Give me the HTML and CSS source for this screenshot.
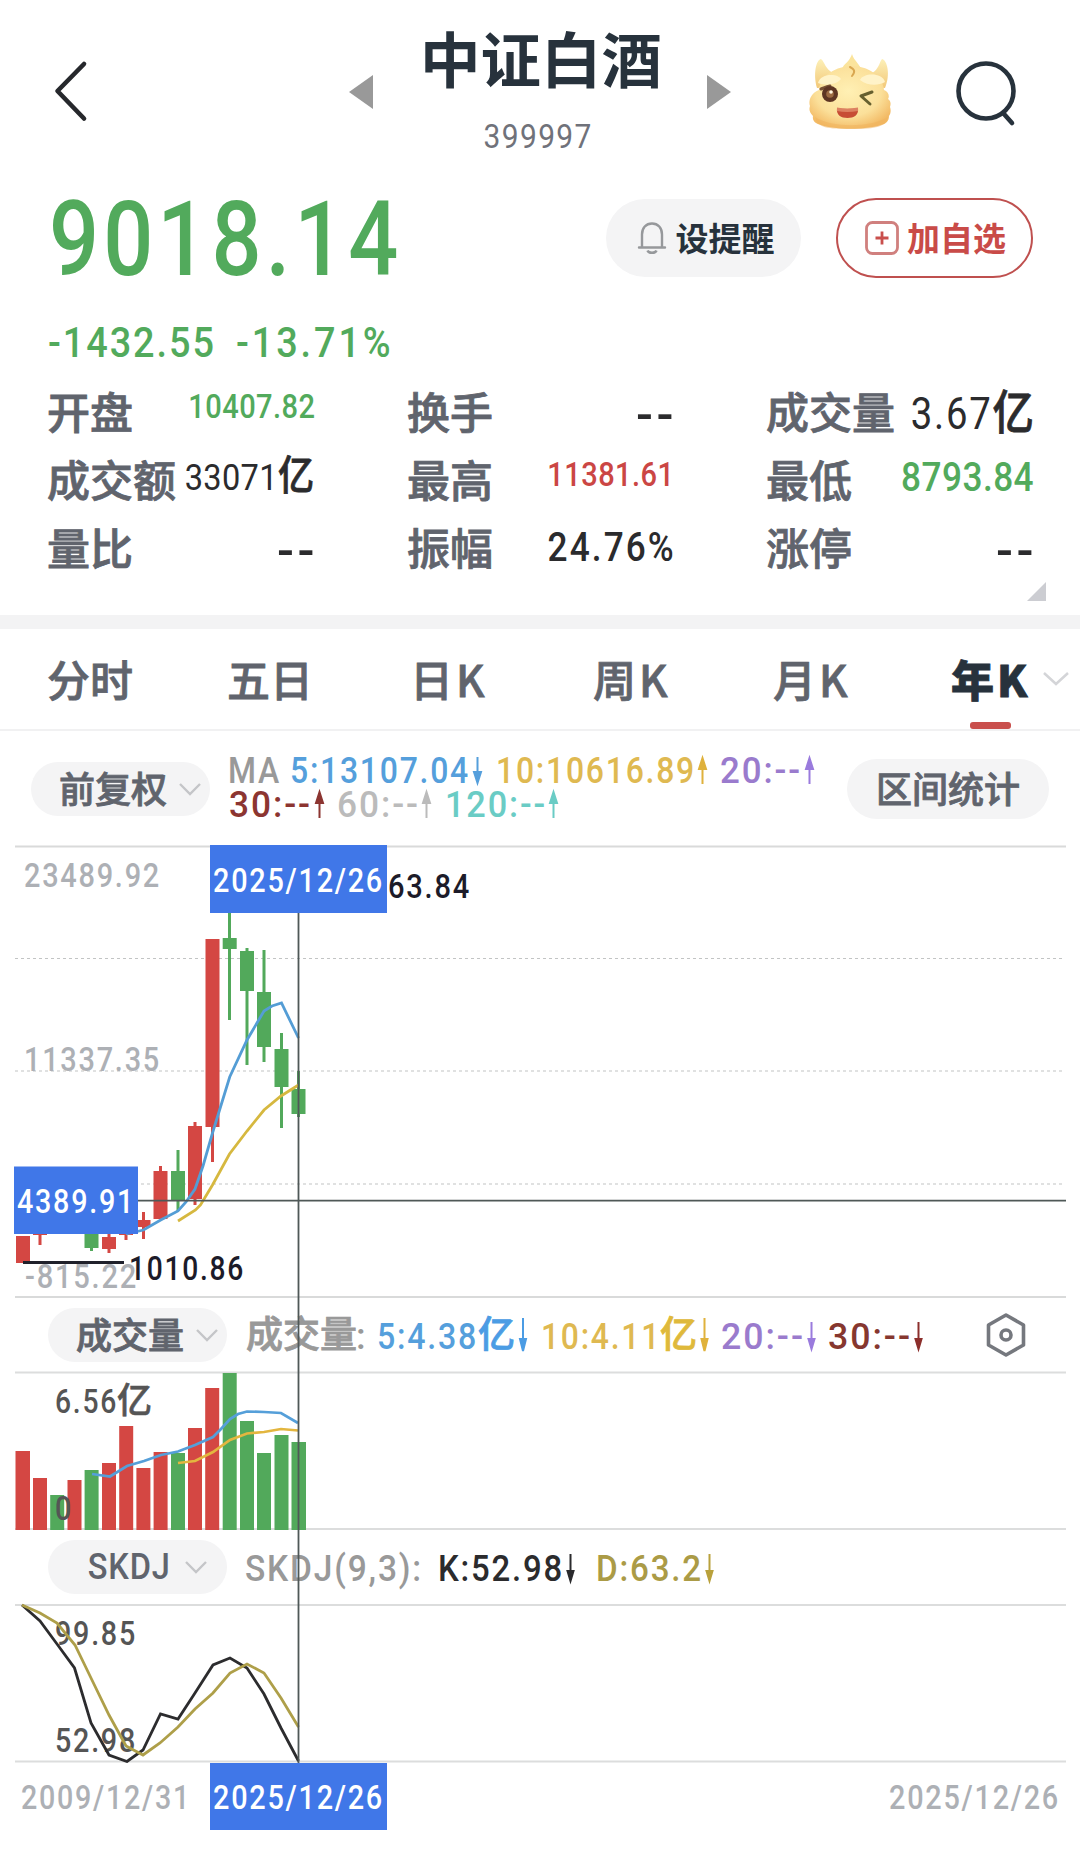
FILE: index.html
```html
<!DOCTYPE html>
<html lang="zh-CN">
<head>
<meta charset="utf-8">
<title>中证白酒 399997</title>
<link rel="stylesheet" href="styles.css">
</head>
<body>
<header class="topbar">
  <svg class="back" width="34" height="62" viewBox="0 0 34 62"><path d="M30 4 3.500 31 30 58.500" fill="none" stroke="#26282c" stroke-width="4.600" stroke-linecap="round" stroke-linejoin="round"/></svg>
  <svg class="prev" width="24" height="34" viewBox="0 0 24 34"><path d="M24 0v34L0 17z" fill="#999"/></svg>
  <div class="title"><h1>中证白酒</h1><span class="code num">399997</span></div>
  <svg class="next" width="24" height="34" viewBox="0 0 24 34"><path d="M0 0v34l24-17z" fill="#999"/></svg>
  <svg class="mascot" width="84" height="80" viewBox="0 0 84 80">
    <defs>
      <radialGradient id="face" cx=".48" cy=".4" r=".62"><stop offset="0" stop-color="#fff0b4"/><stop offset=".65" stop-color="#fbe09a"/><stop offset="1" stop-color="#f3bb66"/></radialGradient>
      <linearGradient id="horn" x1="0" y1="0" x2="0" y2="1"><stop offset="0" stop-color="#fdf0b8"/><stop offset="1" stop-color="#f2c878"/></linearGradient>
    </defs>
    <path d="M8 36C4 22 7 8 12 7c4 3 4 10 12 14l-3 14zM76 36C82 22 78 8 73 7c-3 4-3 10-10 14l3 14z" fill="url(#horn)"/>
    <path d="M33 20c0-9 6-7 10-18 2 7 8 10 10 17z" fill="#fbe49c"/>
    <path d="M10 38C11 23 28 14 43 14s31 9 32 24c4 1 6 6 4 9 3 2 3 5 2 8 1 3 1 6-1 9 0 5-3 8-8 9-16 5-45 5-60 0-5-1-9-4-8-9-4-4-4-7-3-10-2-5 1-13 9-16z" fill="url(#face)"/>
    <path d="M6 65c16 11 56 11 73 0-3 10-11 12-36 12S9 76 6 65z" fill="#efb25b" opacity=".5"/>
    <path d="M9 31c2-10 20-10 23-4-5 6-15 7-23 4zM51 28c3-7 22-8 25 2-7 4-17 4-25-2z" fill="#fff3c9"/>
    <path d="M41 15c4 2 6 4 2 9" fill="none" stroke="#d9a750" stroke-width="2" stroke-linecap="round"/>
    <path d="M12 37c3-1 5-2 9-3" fill="none" stroke="#785135" stroke-width="3" stroke-linecap="round"/>
    <circle cx="21" cy="42" r="8" fill="#5e3523"/><circle cx="21" cy="42" r="3.800" fill="#9c6a42"/><circle cx="22" cy="40" r="1.800" fill="#fff5de"/>
    <path d="m63 40-11 4 9 8" fill="none" stroke="#67602f" stroke-width="3" stroke-linecap="round" stroke-linejoin="round"/>
    <path d="M28 56q10 2 21 0c1 7-4 10-10.500 10S27 63 28 56z" fill="#c74d35"/><path d="M28 55.500q10 2 21 0v3.500q-11 2-21 0z" fill="#dc8161"/>
  </svg>
  <svg class="search" width="60" height="66" viewBox="0 0 60 66"><g fill="none" stroke="#27323c" stroke-width="4.600" stroke-linecap="round"><circle cx="30" cy="30" r="27.500"/><path d="m48 53 8 9"/></g></svg>
</header>

<section class="quote">
  <div class="prices">
    <div class="price num">9018.14</div>
    <div class="change"><span class="num delta">-1432.55</span><span class="num pct">-13.71%</span></div>
  </div>
  <div class="actions">
    <button class="btn remind"><svg width="30" height="34" viewBox="0 0 30 34"><g fill="none" stroke="#96989b" stroke-width="2.400"><path d="M2 26.500h26M5 26V13.500C5 7 9 2.500 15 2.500S25 7 25 13.500V26" stroke-linecap="round"/><path d="M10.500 29.500c1 3 8 3 9 0"/></g></svg>设提醒</button>
    <button class="btn add"><svg width="34" height="34" viewBox="0 0 34 34"><g fill="none" stroke="#d0807e" stroke-width="2.800"><rect x="1.500" y="1.500" width="31" height="31" rx="6"/><path d="M17 10.500v13M10.500 17h13" stroke="#c94f4c"/></g></svg>加自选</button>
  </div>
</section>

<dl class="stats">
  <div><dt>开盘</dt><dd class="s green"><span class="num">10407.82</span></dd></div>
  <div><dt>换手</dt><dd class="dash"><span class="num">--</span></dd></div>
  <div><dt>成交量</dt><dd class="l"><span class="num">3.67<i>亿</i></span></dd></div>
  <div><dt>成交额</dt><dd class="m"><span class="num">33071<i>亿</i></span></dd></div>
  <div><dt>最高</dt><dd class="s red"><span class="num">11381.61</span></dd></div>
  <div><dt>最低</dt><dd class="n green"><span class="num">8793.84</span></dd></div>
  <div><dt>量比</dt><dd class="dash"><span class="num">--</span></dd></div>
  <div><dt>振幅</dt><dd class="p"><span class="num">24.76%</span></dd></div>
  <div><dt>涨停</dt><dd class="dash"><span class="num">--</span></dd></div>
</dl>
<div class="expand"><svg width="19" height="19" viewBox="0 0 19 19"><path d="M19 0v19H0z" fill="#cccdd2"/></svg></div>

<nav class="tabs">
  <a>分时</a><a>五日</a><a>日<b>K</b></a><a>周<b>K</b></a><a>月<b>K</b></a><a class="active">年<b>K</b></a>
  <svg width="28" height="16" viewBox="0 0 28 16"><path d="m2 2 12 11L26 2" fill="none" stroke="#d4d5d8" stroke-width="2.500"/></svg>
</nav>

<main class="charts">
  <div class="bar ma">
    <button class="pill">前复权<svg width="22" height="13" viewBox="0 0 22 13"><path d="m1 1 10 10L21 1" fill="none" stroke="#c4c5c8" stroke-width="2.400"/></svg></button>
    <svg class="legend" width="600" height="94" viewBox="226 742 600 94">
      <g class="t37">
        <text x="228" y="784" textLength="53" lengthAdjust="spacingAndGlyphs" fill="#999">MA</text>
        <text x="290" y="784" textLength="180" lengthAdjust="spacingAndGlyphs" fill="#559fdc">5:13107.04</text>
        <text x="496" y="784" textLength="200" lengthAdjust="spacingAndGlyphs" fill="#dfb951">10:10616.89</text>
        <text x="720" y="784" textLength="82" lengthAdjust="spacingAndGlyphs" fill="#9a7bcd">20:--</text>
        <text x="229" y="818" textLength="83" lengthAdjust="spacingAndGlyphs" fill="#8c3531">30:--</text>
        <text x="337" y="818" textLength="83" lengthAdjust="spacingAndGlyphs" fill="#bbb">60:--</text>
        <text x="445" y="818" textLength="102" lengthAdjust="spacingAndGlyphs" fill="#6accc5">120:--</text>
      </g>
      <g class="arrows">
        <path d="M477.500 758v20m-3.500-5h7l-3.500 11z" stroke="#559fdc" fill="#559fdc"/>
        <path d="M702.500 785v-20m-3.500 5h7l-3.500-11z" stroke="#dfb13c" fill="#dfb13c"/>
        <path d="M809.500 785v-20m-3.500 5h7l-3.500-11z" stroke="#9a7bdd" fill="#9a7bdd"/>
        <path d="M319.500 819v-20m-3.500 5h7l-3.500-11z" stroke="#8c3531" fill="#8c3531"/>
        <path d="M426.500 819v-20m-3.500 5h7l-3.500-11z" stroke="#bbb" fill="#bbb"/>
        <path d="M553.500 819v-20m-3.500 5h7l-3.500-11z" stroke="#6accc5" fill="#6accc5"/>
      </g>
    </svg>
    <button class="pill range">区间统计</button>
  </div>

  <svg class="plot" width="1080" height="454" viewBox="0 845 1080 454">
    <g stroke="#d9dada" stroke-width="2"><path d="M15 846.500h1051M15 1297h1051"/></g>
    <g stroke="#c2c4c4" stroke-width="1.200" stroke-dasharray="3 3"><path d="M15 958.500h1048M15 1071h1048M15 1184h1048"/></g>
    <g class="t33" fill="#adb0b5">
      <text x="24" y="886.500" textLength="137" lengthAdjust="spacingAndGlyphs">23489.92</text>
      <text x="24" y="1071" textLength="137" lengthAdjust="spacingAndGlyphs">11337.35</text>
      <text x="25" y="1288" textLength="113" lengthAdjust="spacingAndGlyphs">-815.22</text>
    </g>
    <g fill="#d44743">
      <path d="M16 1236h14v27H16zM33 1225h14v10H33zM38.500 1234h3v11h-3zM102 1237h14v12h-14zM107.500 1234h3v19h-3zM119 1226h14v9h-14zM124.500 1226h3v14h-3zM136.500 1220h14v7h-14zM142 1212h3v27h-3zM153.500 1171h14v48h-14zM159 1166h3v6h-3zM188 1126h14v73h-14zM193.500 1122h3v83h-3zM205.500 939h14v188h-14zM211 1127h3v35h-3z"/>
    </g>
    <g fill="#52a95b">
      <path d="M84.500 1225h14v23h-14zM90 1240h3v11h-3zM171 1171h14v30h-14zM176.500 1150h3v61h-3zM222.700 938h14v11h-14zM228 900h3v120h-3zM240 951h14v40h-14zM245.500 948h3v117h-3zM257 992h14v55h-14zM262.500 950h3v112h-3zM274.500 1049h14v38h-14zM280 1033h3v95h-3zM291.500 1089h14v25h-14zM297 1071h3v46h-3z"/>
    </g>
    <path d="M126 1234 143.400 1230 160.700 1220 178 1211 186 1202 195 1189 203 1166 212.500 1133 229.700 1077 247 1040 264 1011 272 1006 281.500 1003 298.500 1038" fill="none" stroke="#549dd5" stroke-width="2.800"/>
    <path d="m178 1221 17.500-11 5-5 12-20 17-31 17.500-23 17-21 17-14 17.500-11" fill="none" stroke="#d6b83f" stroke-width="2.800"/>
    <path d="M23 1262.500h101" stroke="#20212b" stroke-width="3"/>
    <text class="t33" x="129" y="1280" textLength="116" lengthAdjust="spacingAndGlyphs" fill="#1c1b29">1010.86</text>
    <text class="t33" x="388" y="898" textLength="83" lengthAdjust="spacingAndGlyphs" fill="#1c1b29">63.84</text>
  </svg>

  <div class="bar volume">
    <button class="pill">成交量<svg width="22" height="13" viewBox="0 0 22 13"><path d="m1 1 10 10L21 1" fill="none" stroke="#c4c5c8" stroke-width="2.400"/></svg></button>
    <svg class="legend" width="690" height="70" viewBox="246 1300 690 70">
      <g class="t37">
        <text class="cn" x="246" y="1348" fill="#999" stroke="#999">成交量</text><text x="356" y="1349" fill="#999">:</text>
        <text x="377" y="1349" textLength="101" lengthAdjust="spacingAndGlyphs" fill="#559fdc">5:4.38</text><text class="cn" x="478" y="1348" fill="#4b9ce4" stroke="#4b9ce4">亿</text>
        <text x="541" y="1349" textLength="120" lengthAdjust="spacingAndGlyphs" fill="#dfb951">10:4.11</text><text class="cn" x="660" y="1348" fill="#dfb93b" stroke="#dfb93b">亿</text>
        <text x="721" y="1349" textLength="84" lengthAdjust="spacingAndGlyphs" fill="#9a7bcd">20:--</text>
        <text x="828" y="1349" textLength="84" lengthAdjust="spacingAndGlyphs" fill="#86372f">30:--</text>
      </g>
      <g class="arrows">
        <path d="M523 1318v25m-3-4h6l-3 12z" stroke="#4b9ce4" fill="#4b9ce4"/>
        <path d="M704.500 1318v25m-3-4h6l-3 12z" stroke="#e0b23c" fill="#e0b23c"/>
        <path d="M811.500 1322v20m-3-3h6l-3 10z" stroke="#9a7bdd" fill="#9a7bdd"/>
        <path d="M918.500 1322v20m-3-3h6l-3 10z" stroke="#8c2f2c" fill="#8c2f2c"/>
      </g>
    </svg>
    <svg class="gear" width="44" height="46" viewBox="0 0 44 46"><g fill="none" stroke="#75787e" stroke-width="3.600" stroke-linejoin="round"><path d="M22 3 39.500 13v20L22 43 4.500 33V13z"/><circle cx="22" cy="23" r="5"/></g></svg>
  </div>

  <svg class="plot" width="1080" height="160" viewBox="0 1371 1080 160">
    <path d="M15 1372.500h1051M15 1529h1051" stroke="#dcdddd" stroke-width="2"/>
    <path fill="#d44743" d="M15.500 1451H30v79H15.500zM33 1478h14v52H33zM67.500 1480h14v50h-14zM102 1463h14v67h-14zM119.200 1426h14v104h-14zM136.400 1468h14v62h-14zM153.600 1452h14v78h-14zM188 1428h14v102h-14zM205.200 1388h14v142h-14z"/>
    <path fill="#52a95b" d="M50.200 1495h14v35h-14zM84.600 1470h14v60h-14zM171 1453h14v77h-14zM222.700 1373h14v157h-14zM240 1421h14v109h-14zM257 1453h14v77h-14zM274.500 1435h14v95h-14zM291.500 1442h14.500v88h-14.500z"/>
    <path d="M92 1474 110 1476.500 127 1466 144 1461 161 1455 178 1451.500 195 1445 213 1437 221 1429 230 1419 238 1414 247 1411.500 264 1412 281 1413 298 1423" fill="none" stroke="#559fd9" stroke-width="2.700"/>
    <path d="M178 1463 195 1461 213 1452 230 1440 247 1433.500 264 1432 281 1429 298 1430.500" fill="none" stroke="#e3b63f" stroke-width="2.700"/>
    <g class="t33" fill="#555"><text x="55" y="1413" textLength="63" lengthAdjust="spacingAndGlyphs">6.56</text><text class="cn" x="117" y="1413" stroke="#555">亿</text><text x="55" y="1520" textLength="18" lengthAdjust="spacingAndGlyphs">0</text></g>
  </svg>

  <div class="bar skdj">
    <button class="pill"><span class="num">SKDJ</span><svg width="22" height="13" viewBox="0 0 22 13"><path d="m1 1 10 10L21 1" fill="none" stroke="#c4c5c8" stroke-width="2.400"/></svg></button>
    <svg class="legend" width="690" height="70" viewBox="245 1533 690 70">
      <g class="t37">
        <text x="245" y="1582" textLength="178" lengthAdjust="spacingAndGlyphs" fill="#999">SKDJ(9,3):</text>
        <text x="438" y="1582" textLength="126" lengthAdjust="spacingAndGlyphs" fill="#2b2b2d">K:52.98</text>
        <text x="596" y="1582" textLength="107" lengthAdjust="spacingAndGlyphs" fill="#ab9b46">D:63.2</text>
      </g>
      <g class="arrows">
        <path d="M570.500 1555v20m-3-3h6l-3 10z" stroke="#2b2b2d" fill="#2b2b2d"/>
        <path d="M709.500 1555v20m-3-3h6l-3 10z" stroke="#b9a13c" fill="#b9a13c"/>
      </g>
    </svg>
  </div>

  <svg class="plot" width="1080" height="160" viewBox="0 1603 1080 160">
    <path d="M15 1605h1051M15 1761.500h1051" stroke="#dcdddd" stroke-width="2"/>
    <g class="t33" fill="#555"><text x="55" y="1645" textLength="82" lengthAdjust="spacingAndGlyphs">99.85</text><text x="55" y="1752" textLength="82" lengthAdjust="spacingAndGlyphs">52.98</text></g>
    <path d="M22 1605 40 1621 57 1644 74.500 1668 91 1723 109 1755 127 1761.500 143 1750 160.500 1714 178 1719 195 1693 213 1665 230 1658 247 1668 264 1694 281 1728 298.500 1761" fill="none" stroke="#2c2c2e" stroke-width="2.800"/>
    <path d="M22 1605 40 1613 57 1623 75 1645 91 1678 109 1715 126 1746 143 1755 160 1743 178 1727 195 1709 213 1693 230 1673 247 1664 264 1673 281 1698 298.500 1727" fill="none" stroke="#ae9f49" stroke-width="2.800"/>
  </svg>

  <svg class="axis" width="1080" height="103" viewBox="0 1763 1080 103">
    <g class="t33" fill="#adb0b5"><text x="21" y="1809" textLength="170" lengthAdjust="spacingAndGlyphs">2009/12/31</text><text x="889" y="1809" textLength="171" lengthAdjust="spacingAndGlyphs">2025/12/26</text></g>
  </svg>

  <svg class="crosshair" width="1080" height="1135" viewBox="0 731 1080 1135">
    <path d="M298.500 912v851M138 1200.700h928" stroke="#4f5857" stroke-width="1.800" fill="none"/>
    <g fill="#4077e8"><path d="M210 845h177v68H210zM14 1166.500h124v67.500H14zM210 1763h177v67H210z"/></g>
    <g class="t33" fill="#fff">
      <text x="213" y="892" textLength="171" lengthAdjust="spacingAndGlyphs">2025/12/26</text>
      <text x="17" y="1213" textLength="118" lengthAdjust="spacingAndGlyphs">4389.91</text>
      <text x="213" y="1809" textLength="171" lengthAdjust="spacingAndGlyphs">2025/12/26</text>
    </g>
  </svg>
</main>
</body>
</html>
```

FILE: styles.css
```css
* { box-sizing: border-box; }
body {
  margin: 0;
  width: 1080px;
  height: 1866px;
  overflow: hidden;
  background: #fff;
  color: #60646d;
  font-family: Roboto, "Noto Sans CJK SC", sans-serif;
}
svg { display: block; flex: none; }
h1, dl, dd { margin: 0; }
button { border: 0; padding: 0; font: inherit; color: inherit; }
.num { display: inline-block; transform: scaleX(.88); white-space: nowrap; -webkit-text-stroke: 0; }

.topbar { display: flex; align-items: flex-start; height: 180px; padding-left: 54px; }
.back { margin-top: 60px; }
.prev { margin: 75px 48px 0 261px; }
.title { width: 240px; height: 160px; display: flex; flex-direction: column; align-items: center; color: #27323c; }
.title h1 { margin-top: 12px; font: 700 60.500px/90px "Noto Sans CJK SC", sans-serif; white-space: nowrap; }
.code { margin-left: -6px; font-size: 34px; line-height: 68px; letter-spacing: 1.600px; color: #70727a; }
.next { margin: 75px 78px 0 46px; }
.mascot { margin-top: 52px; }
.search { margin: 61px 0 0 63px; }

.quote { display: flex; justify-content: space-between; height: 198px; padding: 0 47px 0 48px; }
.prices { color: #52aa5c; }
.prices .num { transform-origin: left; }
.price { display: block; height: 116px; font-size: 103px; font-weight: 500; line-height: 119px; letter-spacing: 4.800px; }
.prices .price { transform: scaleX(.855); margin-left: 1px; }
.change { display: flex; font-size: 43px; font-weight: 500; line-height: 92px; }
.delta { width: 188px; letter-spacing: 2.200px; }
.pct { letter-spacing: 3.300px; }
.actions { display: flex; gap: 35px; padding-top: 18px; }
.btn {
  display: flex; align-items: center; justify-content: center; padding-bottom: 2px;
  border-radius: 40px; font: 700 33px/50px "Noto Sans CJK SC", sans-serif;
}
.btn svg { margin-top: 2px; }
.remind { width: 195px; height: 78px; margin-top: 1px; padding-left: 4px; gap: 9px; background: #f4f4f5; color: #27323c; }
.add { width: 197px; height: 80px; padding-left: 2px; gap: 8px; background: #fff; border: 2px solid #bf504f; color: #c94b48; }

.stats { display: grid; grid-template-columns: 265px 264px 265px; grid-auto-rows: 68px; column-gap: 95px; padding: 0 0 0 48px; height: 204px; }
.stats div { display: flex; align-items: center; }
.stats dt { font: 500 43px/60px "Noto Sans CJK SC", sans-serif; margin: 0 0 5px -1px; white-space: nowrap; }
.stats dt, .tabs, .pill { -webkit-text-stroke: .8px currentColor; }
.stats dd { width: 0; margin-left: auto; display: flex; justify-content: flex-end; color: #2b2b2d; position: static; margin-right: -2px; }
.stats .num { transform-origin: right; line-height: 50px; }
.stats i { font: 500 41px/50px "Noto Sans CJK SC", sans-serif; letter-spacing: 0; -webkit-text-stroke: .8px currentColor; }
.stats .s { font-size: 33px; font-weight: 500; margin-bottom: 10px; letter-spacing: .500px; }
.stats .m { font-size: 37px; margin-bottom: 10px; letter-spacing: .400px; margin-right: -1px; -webkit-text-stroke: .4px currentColor; }
.stats .n { font-size: 40px; font-weight: 500; margin-bottom: 4px; letter-spacing: .500px; }
.stats .p { font-size: 40px; font-weight: 500; letter-spacing: 2.400px; margin-right: -4px; }
.stats .l { font-size: 43.500px; letter-spacing: 2px; -webkit-text-stroke: .4px currentColor; }
.stats .l i { font-size: 47px; }
.stats .dash { font-size: 50px; letter-spacing: 3.500px; font-weight: 500; margin: 6px -5px 0 auto; }
.stats .dash .num { transform: none; }
.stats .green { color: #52aa5c; }
.stats .red { color: #cb4644; }
.expand { height: 47px; padding-left: 1027px; border-bottom: 14px solid #f3f3f4; }

.tabs { display: flex; align-items: center; height: 102px; padding: 0 0 2px 47px; border-bottom: 2px solid #f1f1f2; font: 500 43px/64px "Noto Sans CJK SC", sans-serif; }
.tabs a { width: 180px; white-space: nowrap; }
.tabs a b { font-weight: 500; margin-left: 3px; }
.tabs a:nth-child(3) { width: 183px; }
.tabs a:nth-child(3), .tabs a:nth-child(4), .tabs a:nth-child(5) { padding-left: 3px; }
.tabs a.active { position: relative; color: #27323c; font-weight: 900; width: 92px; padding-left: 1px; }
.tabs a.active b { font-weight: 900; }
.tabs svg { margin-top: 2px; }
.tabs a.active::after { content: ""; position: absolute; left: 20px; bottom: -19px; width: 41px; height: 7px; border-radius: 3px; background: #c94f4c; }

.charts { position: relative; }
.bar { display: flex; align-items: center; }
.pill {
  display: flex; align-items: center; gap: 12px; width: 179px; height: 54px; padding: 0 0 4px 28px;
  border-radius: 27px; background: #f4f4f5; font: 500 36px/50px "Noto Sans CJK SC", sans-serif; white-space: nowrap;
}
.bar .pill svg { margin-top: 4px; }
.ma { height: 114px; padding: 0 0 0 31px; }
.ma .pill { margin-top: 2px; }
.ma .legend { margin-left: 16px; }
.ma .range { width: 202px; height: 60px; margin-left: 21px; padding: 0 0 4px; justify-content: center; border-radius: 30px; }
.volume { height: 72px; padding-left: 48px; }
.skdj { height: 72px; padding-left: 48px; }
.skdj .pill { padding-left: 34px; gap: 8px; }
.skdj .pill .num { font: 500 37px/50px Roboto, sans-serif; letter-spacing: 1px; margin-top: 4px; }
.volume .legend { margin-left: 19px; }
.skdj .legend { margin-left: 18px; }
.gear { margin-left: 48px; }
.t33 { font: 500 33px Roboto, sans-serif; letter-spacing: 2px; }
.t37 { font: 500 36.500px Roboto, sans-serif; letter-spacing: 2px; }
.legend text.cn { font: 500 37px "Noto Sans CJK SC", sans-serif; letter-spacing: 0; stroke-width: .8; }
.plot text.cn { font: 500 35px "Noto Sans CJK SC", sans-serif; letter-spacing: 0; stroke-width: .6; }
.arrows path { stroke-width: 2; }
.crosshair { position: absolute; left: 0; top: 0; pointer-events: none; }
```
